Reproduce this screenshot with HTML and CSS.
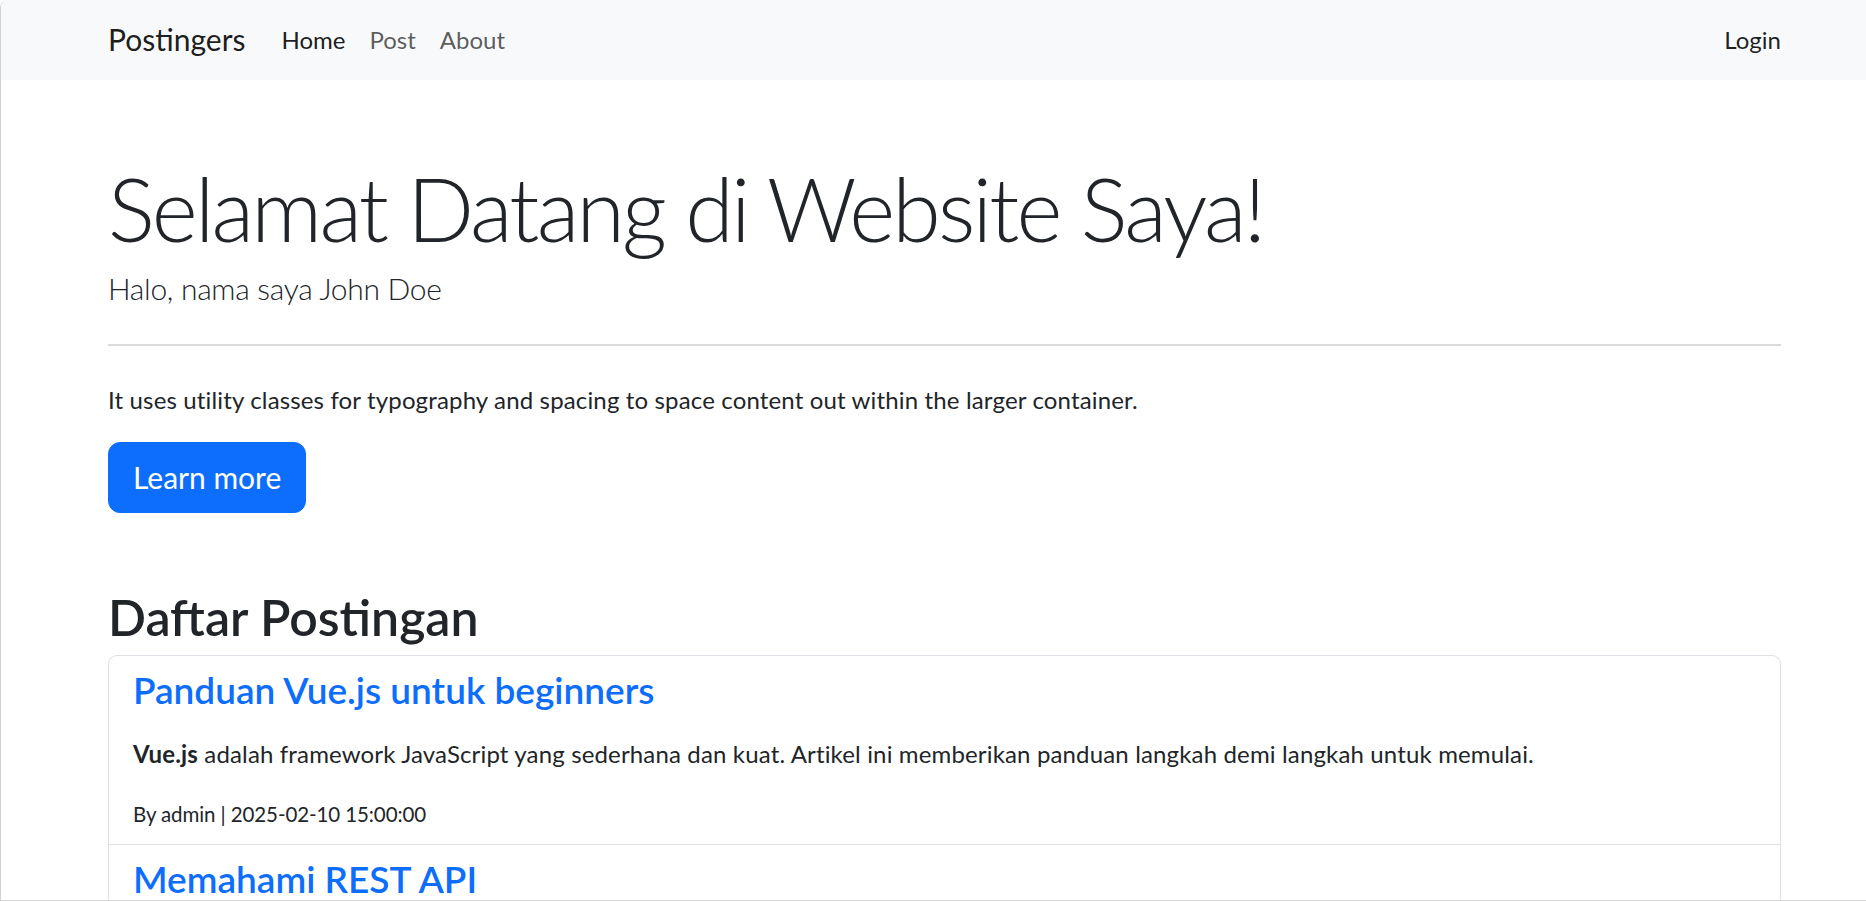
FILE: index.html
```html
<!DOCTYPE html>
<html lang="id">
<head>
<meta charset="utf-8">
<title>Postingers</title>
<link rel="stylesheet" href="styles.css">
</head>
<body>
<div class="window">
  <nav class="navbar">
    <div class="container nav-inner">
      <a class="brand" href="#">Postingers</a>
      <ul class="nav-links">
        <li><a class="nav-link active" href="#">Home</a></li>
        <li><a class="nav-link" href="#">Post</a></li>
        <li><a class="nav-link" href="#">About</a></li>
      </ul>
      <a class="nav-link login" href="#">Login</a>
    </div>
  </nav>
  <main class="container main">
    <h1 class="display">Selamat Datang di Website Saya!</h1>
    <p class="lead">Halo, nama saya John Doe</p>
    <hr class="divider">
    <p class="text">It uses utility classes for typography and spacing to space content out within the larger container.</p>
    <a class="btn-primary" href="#">Learn more</a>
    <h2 class="section-title">Daftar Postingan</h2>
    <div class="card">
      <div class="post">
        <h4 class="post-title"><a href="#">Panduan Vue.js untuk beginners</a></h4>
        <p class="text"><strong>Vue.js</strong> adalah framework JavaScript yang sederhana dan kuat. Artikel ini memberikan panduan langkah demi langkah untuk memulai.</p>
        <p class="text meta">By admin | 2025-02-10 15:00:00</p>
      </div>
      <div class="post">
        <h4 class="post-title"><a href="#">Memahami REST API</a></h4>
        <p class="text">REST API adalah standar komunikasi antar aplikasi melalui protokol HTTP.</p>
        <p class="text meta">By admin | 2025-02-09 10:00:00</p>
      </div>
    </div>
  </main>
</div>
</body>
</html>
```
FILE: styles.css
```css
* { box-sizing: border-box; }
html, body { margin: 0; padding: 0; }
body {
  font-family: "Lato", "Liberation Sans", sans-serif;
  color: #212529;
  background: #ffffff;
}
a { text-decoration: none; }

.window {
  height: 901px;
  overflow: hidden;
  border-left: 1px solid #d2d2d2;
  border-bottom: 1px solid #d6d6d6;
  border-top-left-radius: 8px;
  background: #fff;
}

.container {
  padding-left: 107px;
  padding-right: 85px;
}

.navbar {
  background: #f8f9fa;
  height: 80px;
}
.nav-inner {
  display: flex;
  align-items: center;
  height: 80px;
}
.brand {
  font-size: 30px;
  color: rgba(0, 0, 0, 0.9);
  margin-right: 24px;
  line-height: 1.2;
  padding-bottom: 2px;
}
.nav-links {
  display: flex;
  list-style: none;
  margin: 0;
  padding: 0;
}
.nav-link {
  display: block;
  font-size: 24px;
  line-height: 1.5;
  padding: 0 12px;
  color: rgba(0, 0, 0, 0.65);
}
.nav-link.active { color: rgba(0, 0, 0, 0.9); }
.nav-link.login {
  margin-left: auto;
  padding-right: 0;
  color: rgba(0, 0, 0, 0.88);
}

.main { padding-top: 76px; }

.display {
  font-size: 88px;
  font-weight: 300;
  letter-spacing: -2.8px;
  line-height: 1.2;
  margin: 0;
}
.lead {
  font-size: 30px;
  font-weight: 300;
  letter-spacing: -0.3px;
  line-height: 1.5;
  margin: 4px 0 0;
}
.divider {
  border: 0;
  border-top: 2px solid #dadbdc;
  margin: 33px 0 0;
}
.text {
  font-size: 24px;
  letter-spacing: 0.15px;
  line-height: 1.5;
  margin: 0 0 24px;
}
.main > .text { margin-top: 36px; margin-bottom: 24px; }
.text strong { font-weight: 700; }

.btn-primary {
  display: inline-block;
  background: #0d6efd;
  border: 1px solid #0d6efd;
  color: #fff;
  font-size: 30px;
  line-height: 45px;
  padding: 12px 24px;
  border-radius: 12px;
}

.section-title {
  font-size: 50px;
  font-weight: 600;
  line-height: 1.2;
  margin: 74px 0 8px;
}

.card {
  border: 1px solid #dee2e6;
  border-radius: 9px;
}
.post {
  padding: 12px 24px 14px;
  border-bottom: 1px solid #dee2e6;
}
.post-title {
  font-size: 37px;
  font-weight: 600;
  line-height: 1.2;
  margin: 0 0 24px;
}
.post-title a { color: #0d6efd; }
.text.meta {
  font-size: 20.5px;
  letter-spacing: -0.1px;
  margin: 27px 0 0;
}
.post .text:first-of-type { margin-bottom: 0; }
```
